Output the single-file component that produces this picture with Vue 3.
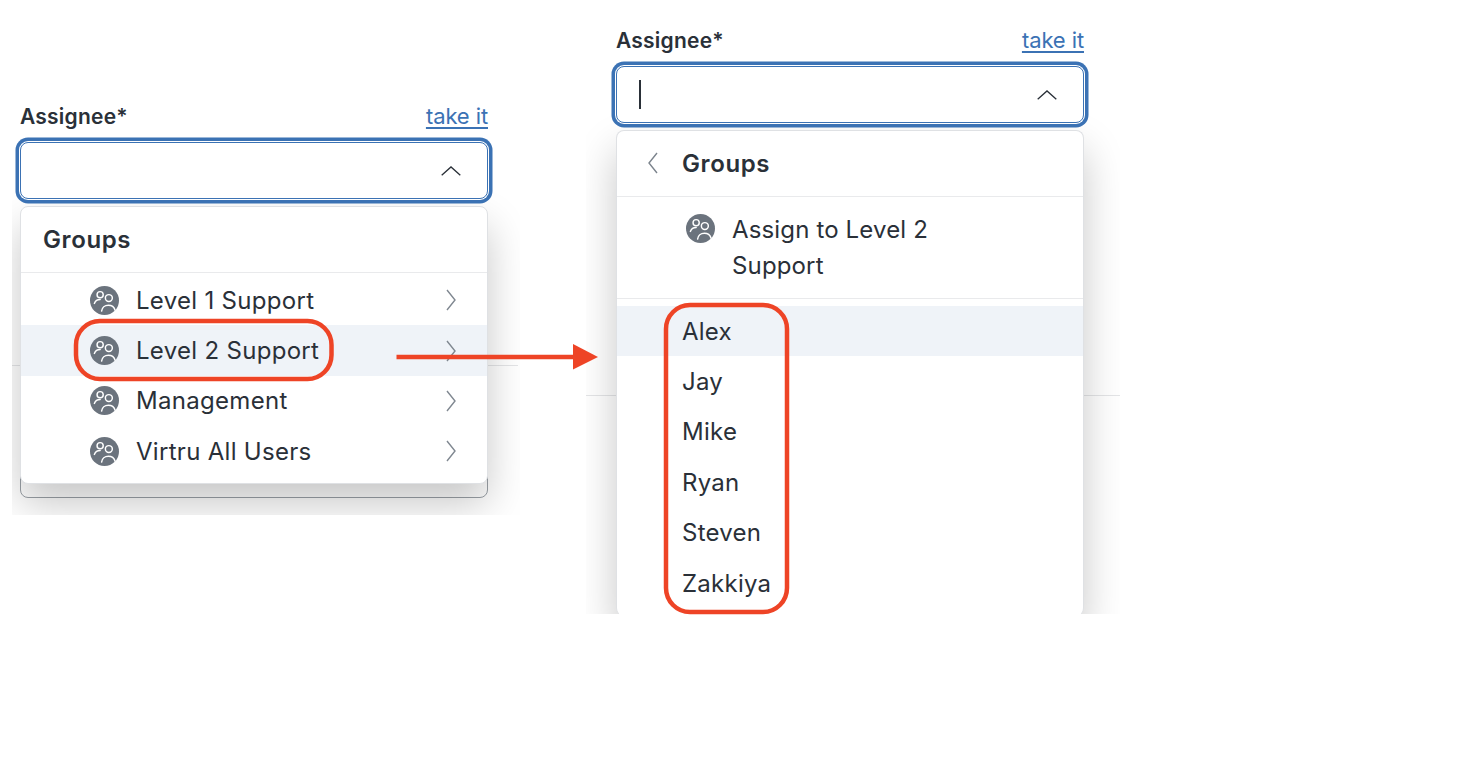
<script setup>
const groups = [
  { name: 'Level 1 Support', active: false },
  { name: 'Level 2 Support', active: true },
  { name: 'Management', active: false },
  { name: 'Virtru All Users', active: false },
]
const people = ['Alex', 'Jay', 'Mike', 'Ryan', 'Steven', 'Zakkiya']
</script>

<template>
  <div class="canvas">
    <!-- first step -->
    <section class="panel panel-left">
      <div class="rule rule-left"></div>
      <div class="under-card"></div>
      <div class="label-row">
        <span class="label">Assignee*</span>
        <a class="link">take it</a>
      </div>
      <div class="field">
        <svg class="chev-up" viewBox="0 0 20 10" width="20" height="10"><path d="M0.7 9.3 10 0.9l9.3 8.4" /></svg>
      </div>
      <div class="menu">
        <div class="menu-head"><span class="head-title">Groups</span></div>
        <ul class="group-list">
          <li v-for="g in groups" :key="g.name" class="group-row" :class="{ active: g.active }">
            <svg class="avatar" viewBox="0 0 30 30" width="29" height="29">
              <circle cx="15" cy="15" r="15" fill="#6b737d" />
              <g fill="none" stroke="#fff" stroke-width="1.5" stroke-linecap="round">
                <circle cx="10.5" cy="9" r="3.2" />
                <circle cx="19.500" cy="12.5" r="3.6" />
                <path d="M4.5 18c1-2.600 3.200-4 6-4" />
                <path d="M12 26c.4-3.600 3.400-6 7-6s6 2 7 5" />
              </g>
            </svg>
            <span class="row-text">{{ g.name }}</span>
            <svg class="chev-right" viewBox="0 0 10 22" width="10" height="22"><path d="M1 1l8 10-8 10" /></svg>
          </li>
        </ul>
      </div>
    </section>

    <!-- second step -->
    <section class="panel panel-right">
      <div class="rule rule-right"></div>
      <div class="label-row">
        <span class="label">Assignee*</span>
        <a class="link">take it</a>
      </div>
      <div class="field">
        <span class="caret"></span>
        <svg class="chev-up" viewBox="0 0 20 10" width="20" height="10"><path d="M0.7 9.3 10 0.9l9.3 8.4" /></svg>
      </div>
      <div class="menu menu-tall">
        <div class="menu-head head-back">
          <svg class="chev-left" viewBox="0 0 10 22" width="10" height="22"><path d="M9 1 1 11l8 10" /></svg>
          <span class="head-title">Groups</span>
        </div>
        <div class="assign-row">
          <svg class="avatar" viewBox="0 0 30 30" width="29" height="29">
            <circle cx="15" cy="15" r="15" fill="#6b737d" />
            <g fill="none" stroke="#fff" stroke-width="1.5" stroke-linecap="round">
              <circle cx="10.5" cy="9" r="3.2" />
              <circle cx="19.500" cy="12.5" r="3.6" />
              <path d="M4.5 18c1-2.600 3.200-4 6-4" />
              <path d="M12 26c.4-3.600 3.400-6 7-6s6 2 7 5" />
            </g>
          </svg>
          <span class="assign-text">Assign to Level 2 Support</span>
        </div>
        <ul class="person-list">
          <li v-for="(p, i) in people" :key="p" class="person-row" :class="{ active: i === 0 }">{{ p }}</li>
        </ul>
      </div>
    </section>

    <!-- red annotations -->
    <svg class="notes" viewBox="0 0 1460 784" width="1460" height="784">
      <rect x="76" y="321" width="255.5" height="58" rx="24" />
      <rect x="666" y="305" width="121" height="307" rx="24" />
      <path d="M396.500 357H576" />
      <polygon points="573,344 598,357 573,369.500" />
    </svg>
  </div>
</template>

<style>
html, body { margin: 0; background: #fff; }
</style>

<style scoped>
.canvas {
  position: relative;
  width: 1460px;
  height: 784px;
  overflow: hidden;
  background: #fff;
  font-family: Inter, "Liberation Sans", sans-serif;
  color: #2a3038;
}
.panel {
  position: absolute;
  overflow: hidden;
  box-sizing: border-box;
}
.panel-left { left: 12px; top: 100px; width: 508px; height: 415px; padding: 0 32px 0 8px; }
.panel-right { left: 586px; top: 20px; width: 534px; height: 594px; padding: 4px 36px 0 30px; }

.rule { position: absolute; left: 0; right: 0; height: 1px; background: #e4e5e7; }
.rule-left { top: 265px; right: 2px; }
.rule-right { top: 375px; }
.under-card {
  position: absolute;
  left: 8px;
  width: 466px;
  top: 300px;
  height: 96px;
  border: 1px solid #9ba1a7;
  border-radius: 8px;
}

.label-row {
  display: flex;
  justify-content: space-between;
  align-items: center;
  height: 32px;
  margin-bottom: 10px;
}
.label { font-size: 21px; font-weight: 600; letter-spacing: 0.22px; }
.link {
  font-size: 22px;
  letter-spacing: -0.1px;
  color: #3b72b4;
  text-decoration: underline;
  text-underline-offset: 3px;
}
.field {
  position: relative;
  z-index: 2;
  box-sizing: border-box;
  height: 57px;
  display: flex;
  align-items: center;
  padding: 0 26px 0 22px;
  border: 1px solid #3b72b4;
  border-radius: 8px;
  background: #fff;
  box-shadow: 0 0 0 1px #fff, 0 0 0 4.500px #3b72b4;
}
.chev-up { margin-left: auto; fill: none; stroke: #2a3038; stroke-width: 1.3; }
.caret { width: 2px; height: 29px; background: #2a3038; }

.menu {
  position: relative;
  z-index: 1;
  box-sizing: border-box;
  margin-top: 7px;
  height: 278px;
  background: #fff;
  border: 1px solid #dfe1e4;
  border-radius: 8px;
  box-shadow: 0 20px 40px rgba(0, 0, 0, 0.22);
}
.menu-tall { height: 486px; border-bottom: 0; }
.menu-head {
  box-sizing: border-box;
  height: 66px;
  display: flex;
  align-items: center;
  padding: 0 0 1px 22px;
  border-bottom: 1px solid #e9eaec;
}
.head-back { padding-left: 31px; gap: 24px; }
.head-title { font-size: 24px; font-weight: 600; letter-spacing: 0.6px; }
.chev-left { fill: none; stroke: #7b838c; stroke-width: 1.4; }

.group-list, .person-list { list-style: none; margin: 0; padding: 0; }
.group-list { padding-top: 2px; }
.group-row {
  height: 50.400px;
  display: flex;
  align-items: center;
  padding: 0 31px 0 69px;
  font-size: 24px;
  letter-spacing: 0.3px;
}
.group-row .row-text { margin-left: 17px; }
.chev-right { margin-left: auto; fill: none; stroke: #7f8790; stroke-width: 1.4; }
.active { background: #eff3f8; }

.assign-row {
  box-sizing: border-box;
  height: 102px;
  display: flex;
  align-items: flex-start;
  padding: 15px 0 0 69px;
  border-bottom: 1px solid #e9eaec;
}
.assign-row .avatar { margin-top: 2px; }
.assign-text {
  width: 228px;
  margin-left: 17px;
  font-size: 24px;
  line-height: 36px;
  letter-spacing: 0.15px;
}
.person-list { padding-top: 7px; }
.person-row {
  box-sizing: border-box;
  height: 50.400px;
  display: flex;
  align-items: center;
  padding-left: 65px;
  font-size: 24px;
  letter-spacing: 0.25px;
}

.notes { position: absolute; left: 0; top: 0; z-index: 5; pointer-events: none; }
.notes rect, .notes path { fill: none; stroke: #ee4426; stroke-width: 4.500; }
.notes polygon { fill: #ee4426; }
</style>
